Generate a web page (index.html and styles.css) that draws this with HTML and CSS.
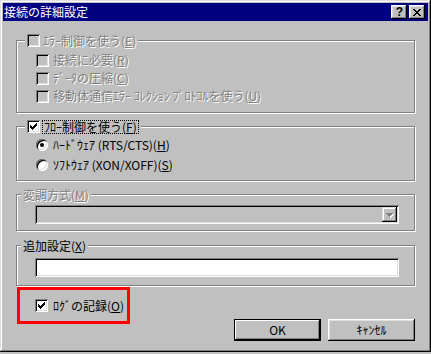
FILE: index.html
```html
<!DOCTYPE html>
<html lang="ja">
<head>
<meta charset="utf-8">
<title>接続の詳細設定</title>
<link rel="stylesheet" href="styles.css">
</head>
<body>
<div class="window">
  <div class="titlebar">
    <span class="title">接続の詳細設定</span>
    <div class="tbtns">
      <span class="tbtn help">?</span>
      <span class="tbtn">
        <svg width="8" height="7" viewBox="0 0 8 7" shape-rendering="crispEdges"><path fill="#000" d="M0 0h2v1H0zM6 0h2v1H6zM1 1h2v1H1zM5 1h2v1H5zM2 2h4v1H2zM3 3h2v1H3zM2 4h4v1H2zM1 5h2v1H1zM5 5h2v1H5zM0 6h2v1H0zM6 6h2v1H6z"/></svg>
      </span>
    </div>
  </div>
  <div class="content">
    <fieldset class="group g1">
      <legend class="lg-chk"><span class="lg"><span class="chk dis"></span><span class="lbl dis">ｴﾗｰ制御を使う(<u>E</u>)</span></span></legend>
      <div class="items">
        <div class="row"><span class="chk dis"></span><span class="lbl dis">接続に必要(<u>R</u>)</span></div>
        <div class="row"><span class="chk dis"></span><span class="lbl dis">ﾃﾞｰﾀの圧縮(<u>C</u>)</span></div>
        <div class="row"><span class="chk dis"></span><span class="lbl dis">移動体通信ｴﾗｰ ｺﾚｸｼｮﾝ ﾌﾟﾛﾄｺﾙを使う(<u>U</u>)</span></div>
      </div>
    </fieldset>
    <fieldset class="group g2">
      <legend class="lg-chk"><span class="lg"><span class="chk"><svg class="tick" width="7" height="7" viewBox="0 0 7 7" shape-rendering="crispEdges"><path fill="#000" d="M6 0h1v1H6zM5 1h2v1H5zM0 2h1v1H0zM4 2h3v1H4zM0 3h2v1H0zM3 3h3v1H3zM0 4h5v1H0zM1 5h3v1H1zM2 6h1v1H2z"/></svg></span><span class="lbl focus">ﾌﾛｰ制御を使う(<u>F</u>)</span></span></legend>
      <div class="items radios">
        <div class="row"><span class="radio on"></span><span class="lbl">ﾊｰﾄﾞｳｪｱ (RTS/CTS)(<u>H</u>)</span></div>
        <div class="row"><span class="radio"></span><span class="lbl">ｿﾌﾄｳｪｱ (XON/XOFF)(<u>S</u>)</span></div>
      </div>
    </fieldset>
    <fieldset class="group g3">
      <legend class="lg-txt"><span class="lbl dis">変調方式(<u>M</u>)</span></legend>
      <div class="combo">
        <span class="drop">
          <svg width="8" height="5" viewBox="0 0 8 5" shape-rendering="crispEdges"><path fill="#fff" d="M1 1h7v1H1zM2 2h5v1H2zM3 3h3v1H3zM4 4h1v1H4z"/><path fill="#808080" d="M0 0h7v1H0zM1 1h5v1H1zM2 2h3v1H2zM3 3h1v1H3z"/></svg>
        </span>
      </div>
    </fieldset>
    <fieldset class="group g4">
      <legend class="lg-txt"><span class="lbl">追加設定(<u>X</u>)</span></legend>
      <div class="edit"></div>
    </fieldset>
    <div class="bottom">
      <div class="mark">
        <span class="chk"><svg class="tick" width="7" height="7" viewBox="0 0 7 7" shape-rendering="crispEdges"><path fill="#000" d="M6 0h1v1H6zM5 1h2v1H5zM0 2h1v1H0zM4 2h3v1H4zM0 3h2v1H0zM3 3h3v1H3zM0 4h5v1H0zM1 5h3v1H1zM2 6h1v1H2z"/></svg></span>
        <span class="lbl">ﾛｸﾞの記録(<u>O</u>)</span>
      </div>
      <div class="buttons">
        <button class="btn default">OK</button>
        <button class="btn">ｷｬﾝｾﾙ</button>
      </div>
    </div>
  </div>
</div>
</body>
</html>
```

FILE: styles.css
```css
* { box-sizing: border-box; }
html, body { margin: 0; padding: 0; background: #c0c0c0; }
body {
  font-family: "Noto Sans CJK JP", "Noto Sans", sans-serif;
  font-size: 12px;
  line-height: 14px;
  color: #000;
}
u { text-underline-offset: 1px; }

.window {
  width: 431px;
  height: 352px;
  padding: 3px;
  background: #c0c0c0;
  display: flex;
  flex-direction: column;
  box-shadow: inset -1px -1px #000, inset 1px 1px #dfdfdf, inset -2px -2px #808080, inset 2px 2px #fff;
}

.titlebar {
  height: 18px;
  background: #000080;
  color: #fff;
  display: flex;
  align-items: center;
  justify-content: space-between;
  padding: 0 3px 0 1px;
  flex: none;
}
.title { font-size: 12px; line-height: 16px; }
.tbtns { display: flex; gap: 2px; }
.tbtn {
  width: 16px;
  height: 14px;
  background: #c0c0c0;
  color: #000;
  display: flex;
  align-items: center;
  justify-content: center;
  box-shadow: inset -1px -1px #000, inset 1px 1px #fff, inset -2px -2px #808080, inset 2px 2px #dfdfdf;
}
.tbtn.help {
  font-family: "Liberation Sans", sans-serif;
  font-weight: bold;
  font-size: 12px;
  line-height: 12px;
  padding-left: 1px;
}

.content {
  padding: 12px 13px 0 13px;
  display: flex;
  flex-direction: column;
}

.group {
  margin: 0;
  padding: 0;
  min-width: 0;
  border: 1px solid #808080;
  box-shadow: inset 1px 1px #fff, 1px 1px #fff;
}
.group legend {
  padding: 0 2px;
  height: 15px;
  background: #c0c0c0;
}
.lg-chk { margin-left: 8px; }
.lg-txt { margin-left: 4px; line-height: 15px; }
.lg { display: flex; align-items: center; height: 15px; }
.lg .chk { margin-right: 3px; }
.g2 .lg .chk { margin-right: 2px; }

.g2 { margin-top: 6px; }
.g3 { margin-top: 6px; }
.g4 { margin-top: 7px; }

.items { padding: 3px 0 7px 19px; }
.items.radios { padding: 1px 0 5px 19px; }
.row { height: 18px; display: flex; align-items: center; }
.radios .row { height: 20px; }
.row .chk { margin-right: 4px; }
.row .radio { margin-right: 5px; }

.lbl { white-space: nowrap; }
.dis { color: #808080; text-shadow: 1px 1px 0 #fff; }
.focus { border: 1px dotted #000; padding: 0 1px; line-height: 12px; }

.chk {
  width: 13px;
  height: 13px;
  flex: none;
  background: #fff;
  display: flex;
  align-items: center;
  justify-content: center;
  box-shadow: inset 1px 1px #808080, inset -1px -1px #fff, inset 2px 2px #000, inset -2px -2px #dfdfdf;
}
.chk.dis { background: #c0c0c0; }

.radio {
  width: 12px;
  height: 12px;
  flex: none;
  border-radius: 50%;
  background: #fff;
  display: flex;
  align-items: center;
  justify-content: center;
  box-shadow: inset 1px 1px #808080, inset -1px -1px #fff, inset 2px 2px #000, inset -2px -2px #dfdfdf;
}
.radio.on::after {
  content: "";
  width: 4px;
  height: 4px;
  border-radius: 50%;
  background: #000;
}

.combo {
  margin: 3px 15px 6px 18px;
  height: 19px;
  padding: 2px;
  background: #c0c0c0;
  display: flex;
  justify-content: flex-end;
  box-shadow: inset 1px 1px #808080, inset -1px -1px #fff, inset 2px 2px #000, inset -2px -2px #dfdfdf;
}
.drop {
  width: 15px;
  height: 15px;
  background: #c0c0c0;
  display: flex;
  align-items: center;
  justify-content: center;
  padding-top: 1px;
  box-shadow: inset -1px -1px #000, inset 1px 1px #dfdfdf, inset -2px -2px #808080, inset 2px 2px #fff;
}

.edit {
  margin: 5px 15px 8px 18px;
  height: 19px;
  background: #fff;
  box-shadow: inset 1px 1px #808080, inset -1px -1px #fff, inset 2px 2px #000, inset -2px -2px #dfdfdf;
}

.bottom {
  margin-top: 1px;
  display: flex;
  align-items: flex-start;
}
.mark {
  margin-left: 1px;
  width: 113px;
  height: 37px;
  border: 3px solid #ff0000;
  padding-left: 15px;
  display: flex;
  align-items: center;
}
.mark .chk { margin-right: 5px; }

.buttons {
  margin-left: auto;
  margin-top: 32px;
  display: flex;
  gap: 7px;
}
.btn {
  width: 87px;
  height: 22px;
  padding: 0;
  border: none;
  background: #c0c0c0;
  font-family: "Noto Sans CJK JP", "Noto Sans", sans-serif;
  font-size: 12px;
  line-height: 14px;
  color: #000;
  box-shadow: inset -1px -1px #000, inset 1px 1px #fff, inset -2px -2px #808080, inset 2px 2px #dfdfdf;
}
.btn.default {
  box-shadow: inset 0 0 0 1px #000, inset -2px -2px #000, inset 2px 2px #fff, inset -3px -3px #808080;
}
```
